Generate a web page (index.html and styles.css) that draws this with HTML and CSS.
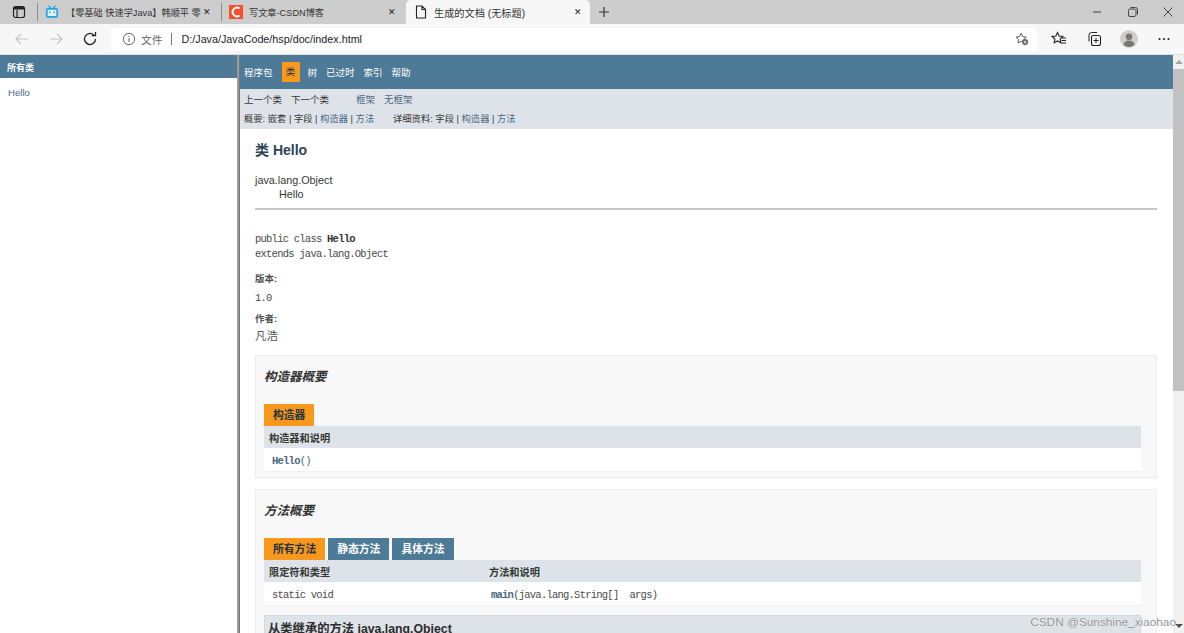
FILE: index.html
```html
<!DOCTYPE html>
<html lang="en">
<head>
  <meta charset="UTF-8"/>
  <title>生成的文档 (无标题)</title>
  <link rel="stylesheet" href="styles.css">
</head>
<body>
  <!-- Tab strip -->
  <div class="tabstrip">
    <div class="tab-menu">
      <svg width="14" height="14" viewBox="0 0 14 14"><rect x="1.500" y="1.500" width="11" height="11" rx="2" fill="none" stroke="#222" stroke-width="1.200"/><path d="M5 5v7.500" fill="none" stroke="#222" stroke-width="1.200"/><rect x="2" y="2" width="10" height="2.500" fill="#222"/></svg>
    </div>
    <div class="sep"></div>
    <div class="tab tab-a">
      <svg class="favicon" width="14" height="14" viewBox="0 0 16 16"><path d="M4 1l2.500 2.500M12 1L9.500 3.500" stroke="#20a4dc" stroke-width="1.500" fill="none"/><rect x="1" y="3.500" width="14" height="11" rx="2.500" fill="#20a4dc"/><rect x="3" y="5.300" width="10" height="7.400" rx="1" fill="#dff2fa"/><path d="M5.500 7.500v2M10.500 7.500v2" stroke="#20a4dc" stroke-width="1.500"/></svg>
      <span class="tab-title">【零基础 快速学Java】韩顺平 零</span>
      <span class="tab-x">✕</span>
    </div>
    <div class="sep"></div>
    <div class="tab tab-b">
      <svg class="favicon" width="14" height="14" viewBox="0 0 14 14"><rect width="14" height="14" fill="#f4502e"/><path d="M10.500 3.500A4.300 4.300 0 1 0 10.500 10.500" fill="none" stroke="#fff" stroke-width="2"/></svg>
      <span class="tab-title">写文章-CSDN博客</span>
      <span class="tab-x">✕</span>
    </div>
    <div class="tab tab-active">
      <svg class="favicon" width="14" height="14" viewBox="0 0 14 14"><path d="M2.500 1h5.500l3.500 3.500V13h-9zM8 1v3.500h3.500" fill="none" stroke="#222" stroke-width="1.100"/></svg>
      <span class="tab-title">生成的文档 (无标题)</span>
      <span class="tab-x">✕</span>
    </div>
    <svg class="tab-new" width="14" height="14" viewBox="0 0 14 14"><path d="M7 2v10M2 7h10" stroke="#333" stroke-width="1.200"/></svg>
    <div class="win-btns">
      <svg width="12" height="12" viewBox="0 0 12 12"><path d="M2 6h8" stroke="#555" stroke-width="1.200"/></svg>
      <svg width="12" height="12" viewBox="0 0 12 12"><rect x="1.500" y="3" width="7.500" height="7.500" rx="1.500" fill="none" stroke="#444"/><path d="M3.500 1.500h5a2 2 0 0 1 2 2v5" fill="none" stroke="#444"/></svg>
      <svg width="12" height="12" viewBox="0 0 12 12"><path d="M1.500 1.500l9 9M10.500 1.500l-9 9" stroke="#444"/></svg>
    </div>
  </div>

  <!-- Toolbar -->
  <div class="toolbar">
    <svg class="tool-icon" width="16" height="16" viewBox="0 0 16 16"><path d="M14 8H2M7 3L2 8l5 5" fill="none" stroke="#c4c4c4" stroke-width="1.200"/></svg>
    <svg class="tool-icon" width="16" height="16" viewBox="0 0 16 16"><path d="M2 8h12M9 3l5 5-5 5" fill="none" stroke="#c4c4c4" stroke-width="1.200"/></svg>
    <svg class="tool-icon" width="16" height="16" viewBox="0 0 16 16"><path d="M13.500 8a5.500 5.500 0 1 1-1.700-4" fill="none" stroke="#222" stroke-width="1.300"/><path d="M13.500 1v3.700H9.800" fill="none" stroke="#222" stroke-width="1.300"/></svg>
    <div class="addr">
      <svg width="14" height="14" viewBox="0 0 14 14"><circle cx="7" cy="7" r="5.700" fill="none" stroke="#666"/><path d="M7 6v4M7 3.800v1.200" stroke="#666"/></svg>
      <span class="addr-label">文件</span>
      <span class="addr-sep"></span>
      <span class="addr-url">D:/Java/JavaCode/hsp/doc/index.html</span>
      <svg class="addr-star" width="14" height="14" viewBox="0 0 16 16"><path d="M7 1.500l1.800 3.800 4 .5-2.900 2.800.6 3.900L7 10.600l-3.500 1.900.6-3.900L1.200 5.800l4-.5z" fill="none" stroke="#444"/><circle cx="11.500" cy="11.500" r="3.500" fill="#666"/><path d="M11.500 10v3M10 11.500h3" stroke="#fff"/></svg>
    </div>
    <div class="tool-right">
      <svg width="16" height="16" viewBox="0 0 16 16"><path d="M6.500 1.500l1.600 3.500 3.700.5-2.700 2.500.7 3.800-3.300-1.900-3.300 1.900.7-3.800L1.200 5.500l3.700-.5z" fill="none" stroke="#222" stroke-width="1.100"/><path d="M11 7h4M10.500 9.500h4.500M10 12h5" stroke="#222"/></svg>
      <svg width="16" height="16" viewBox="0 0 16 16"><path d="M3 10.500V4a2.500 2.500 0 0 1 2.500-2.500H11" fill="none" stroke="#222"/><rect x="5.500" y="4.500" width="9" height="10" rx="2" fill="none" stroke="#222" stroke-width="1.100"/><path d="M10 7v5M7.500 9.500h5" stroke="#222"/></svg>
      <svg width="18" height="18" viewBox="0 0 18 18"><circle cx="9" cy="9" r="9" fill="#d0cfcd"/><circle cx="9" cy="6.800" r="3.300" fill="#777"/><path d="M3.500 15c.5-3.500 3-4.500 5.500-4.500s5 1 5.500 4.500a9 9 0 0 1-11 0z" fill="#777"/></svg>
      <svg width="14" height="14" viewBox="0 0 14 14"><circle cx="2.500" cy="7" r="1.100" fill="#222"/><circle cx="7" cy="7" r="1.100" fill="#222"/><circle cx="11.500" cy="7" r="1.100" fill="#222"/></svg>
    </div>
  </div>

  <div class="frames">
    <!-- Left frame -->
    <div class="side">
      <div class="side-head">所有类</div>
      <div class="side-link">Hello</div>
    </div>
    <div class="divider"></div>

    <!-- Doc frame -->
    <div class="doc">
      <div class="topnav">
        <span>程序包</span>
        <span class="nav-on">类</span>
        <span>树</span>
        <span>已过时</span>
        <span>索引</span>
        <span>帮助</span>
      </div>
      <div class="subnav">
        <div class="subnav-row row-1">
          <span class="w-prev">上一个类</span><span class="w-next">下一个类</span>
          <a>框架</a><a class="gap-s">无框架</a>
        </div>
        <div class="subnav-row row-2">
          <span class="w-sum">概要: 嵌套 | 字段 | <a>构造器</a> | <a>方法</a></span>
          <span>详细资料: 字段 | <a>构造器</a> | <a>方法</a></span>
        </div>
      </div>

      <div class="content">
        <h2 class="title">类 Hello</h2>
        <div class="inherit">java.lang.Object</div>
        <div class="inherit indent">Hello</div>
        <div class="rule"></div>

        <div class="mono sig">public class <b>Hello</b></div>
        <div class="mono sig">extends java.lang.Object</div>
        <div class="tag">版本:</div>
        <div class="mono tag-val">1.0</div>
        <div class="tag tag-2">作者:</div>
        <div class="author">凡浩</div>

        <div class="block">
          <h3 class="block-title">构造器概要</h3>
          <div class="tabs"><span class="cap">构造器</span></div>
          <div class="thead"><span>构造器和说明</span></div>
          <div class="trow"><span class="mono"><a class="strong">Hello</a><a>()</a></span></div>
        </div>

        <div class="block block-2">
          <h3 class="block-title">方法概要</h3>
          <div class="tabs">
            <span class="cap">所有方法</span>
            <span class="cap cap-off">静态方法</span>
            <span class="cap cap-off">具体方法</span>
          </div>
          <div class="thead"><span class="col-a">限定符和类型</span><span>方法和说明</span></div>
          <div class="trow"><span class="mono col-a">static void</span><span class="mono col-b"><a class="strong">main</a>(java.lang.String[]&nbsp; args)</span></div>
          <div class="inherited">从类继承的方法 java.lang.Object</div>
        </div>
      </div>
    </div>

    <div class="scrollbar">
      <div class="sb-btn"><i class="arrow-up"></i></div>
      <div class="sb-thumb"></div>
      <div class="sb-track"></div>
      <div class="sb-btn"><i class="arrow-down"></i></div>
    </div>
  </div>

  <div class="watermark">CSDN @Sunshine_xiaohao</div>
</body>
</html>
```

FILE: styles.css
```css
:root {
  --blue: #4d7a97;
  --orange: #f8981d;
  --pale: #dee3e9;
  --link: #4a6782;
}
* { margin:0; padding:0; box-sizing:border-box }
html, body { width:100%; height:100%; overflow:hidden }
body {
  display:flex; flex-direction:column;
  position:relative;
  font-family: "Liberation Sans", "Noto Sans CJK SC", sans-serif;
  background:#fff;
}

/* Tab strip */
.tabstrip {
  height:24px; flex:none;
  display:flex; align-items:center;
  background:#cdcdcd;
  font-size:9.200px; color:#333;
}
.tab-menu { width:37px; display:flex; justify-content:center }
.sep { width:1px; height:18px; background:#8f8f8f; flex:none }
.tab { display:flex; align-items:center; height:24px; flex:none }
.tab-title { overflow:hidden; white-space:nowrap }
.tab-a { width:183px; padding-left:7px }
.tab-a .tab-title { width:137px; margin-left:7px }
.tab-b { width:184px; padding-left:7px }
.tab-b .tab-title { width:139px; margin-left:6px }
.tab-active {
  width:184px; height:27px; padding:0 0 3px 8px; align-self:flex-start;
  background:#f7f7f7; border-radius:5px 5px 0 0;
  font-size:10.200px;
}
.tab-active .tab-title { width:140px; margin-left:6px }
.tab-x { font-size:9px; color:#222; font-family:"DejaVu Sans", sans-serif }
.tab-new { margin-left:7px }
.win-btns {
  margin-left:auto; width:93px; padding-right:10px;
  display:flex; justify-content:space-between; align-items:center;
}

/* Toolbar */
.toolbar {
  height:31px; flex:none;
  display:flex; align-items:center;
  background:#f7f7f7; border-bottom:1px solid #dedede;
  padding-left:14px;
}
.tool-icon { margin-right:18px }
.toolbar .tool-icon:nth-child(3) { margin-right:13px }
.addr {
  width:926px; height:23px; flex:none;
  background:#fff; border-radius:4px;
  display:flex; align-items:center; padding-left:11px;
  font-size:10.750px; color:#222;
}
.addr-label { margin-left:5px; color:#666 }
.addr-sep { width:1px; height:12px; background:#777; margin:0 10px 0 8px }
.addr-url { color:#222 }
.addr-star { margin-left:auto; margin-right:8px }
.tool-right {
  flex:1; display:flex; align-items:center; justify-content:space-between;
  padding:0 13px 0 14px;
}

/* Frames */
.frames { flex:1; display:flex; min-height:0 }
.side { width:237px; flex:none; background:#fff }
.side-head {
  height:23px; background:var(--blue); color:#fff;
  font-size:9px; font-weight:bold; line-height:26px; padding-left:7px;
}
.side-link { font-size:9.600px; color:var(--link); padding:9px 8px }
.divider { width:3px; flex:none; background:#9a9a9a; border-right:1px solid #777 }
.doc { flex:1; min-width:0; overflow:hidden; font-size:9.500px; color:#353833 }
.doc a { color:var(--link) }

/* Top nav */
.topnav {
  height:34px; background:var(--blue); color:#fff;
  display:flex; align-items:center; gap:9px; padding-left:4px;
}
.nav-on {
  background:var(--orange); color:#253441;
  width:18px; height:20px; line-height:20px; text-align:center;
  margin-right:-1px;
}
.subnav { height:40px; background:var(--pale) }
.subnav-row { display:flex; align-items:center; padding-left:4px; white-space:pre }
.row-1 { height:19px }
.row-2 { height:20px; font-size:9.300px }
.w-prev { width:47px }
.w-next { width:65px }
.gap-s { margin-left:9px }
.w-sum { width:149px }

/* Content */
.content { padding:0 16px 0 15px }
.title { font-size:14px; font-weight:bold; color:#2c4557; margin-top:12px; height:18px; line-height:18px }
.inherit { font-size:10.800px; line-height:14px; color:#353833 }
.title + .inherit { margin-top:14px }
.indent { padding-left:24px }
.rule { height:2px; background:#c8c8c8; margin-top:7px }
.mono {
  font-family:"Liberation Mono", "Noto Sans CJK SC", monospace;
  font-size:10.500px; letter-spacing:-.76px; color:#4a4a4a;
}
.mono b { color:#333 }
.sig { line-height:15px }
.rule + .sig { margin-top:22px }
.tag { font-size:9.500px; font-weight:bold; color:#4e4e4e; line-height:12px; margin-top:11px }
.tag-val { margin-top:6px; line-height:14px }
.tag-2 { margin-top:8px }
.author { font-size:11.500px; color:#555; margin-top:4px; line-height:15px }

/* Summary blocks */
.block {
  margin-top:11px; padding:0 15px 5px 8px;
  background:#f8f8f8; border:1px solid #ededed;
}
.block-2 { padding-bottom:0; height:200px }
.block-title {
  font-size:12.500px; font-style:italic; font-weight:bold; color:#333;
  margin-top:13px; line-height:16px; margin-bottom:19px;
}
.tabs { display:flex; gap:3px; height:22px }
.cap {
  background:var(--orange); color:#253441;
  font-size:10.800px; font-weight:bold; line-height:22px;
  padding:0 9px; height:22px;
}
.cap-off { background:var(--blue); color:#fff }
.thead {
  height:22px; background:var(--pale);
  display:flex; align-items:center; padding-left:5px;
  font-size:10.200px; font-weight:bold; color:#353833;
}
.trow {
  height:24px; padding:2px 0 0 8px; background:#fff; border-bottom:1px solid #f0f0f0;
  display:flex; align-items:center;
}
.col-a { width:220px; flex:none }
.trow .col-a { width:219px }
.strong { font-weight:bold }
.inherited {
  margin-top:9px; height:30px; padding:3px 3px 0;
  background:var(--pale); border:1px solid #d0d9e0;
  font-size:12.300px; font-weight:bold; color:#2c2c2c;
}

/* Scrollbar */
.scrollbar { width:11px; flex:none; display:flex; flex-direction:column; background:#f1f1f1 }
.sb-btn { height:14px; flex:none; display:flex; align-items:center; justify-content:center }
.sb-thumb { height:322px; background:#c1c1c1; flex:none }
.sb-track { flex:1 }
.arrow-up, .arrow-down { width:0; height:0; border:4px solid transparent }
.arrow-up { border-bottom-color:#a3a3a3; border-top-width:0 }
.arrow-down { border-top-color:#505050; border-bottom-width:0 }

/* Watermark over the shot */
.watermark {
  position:absolute; right:8px; bottom:4px;
  font-size:11.800px; color:rgba(120,120,120,.8);
  text-shadow:0 0 1px #fff;
}
```
